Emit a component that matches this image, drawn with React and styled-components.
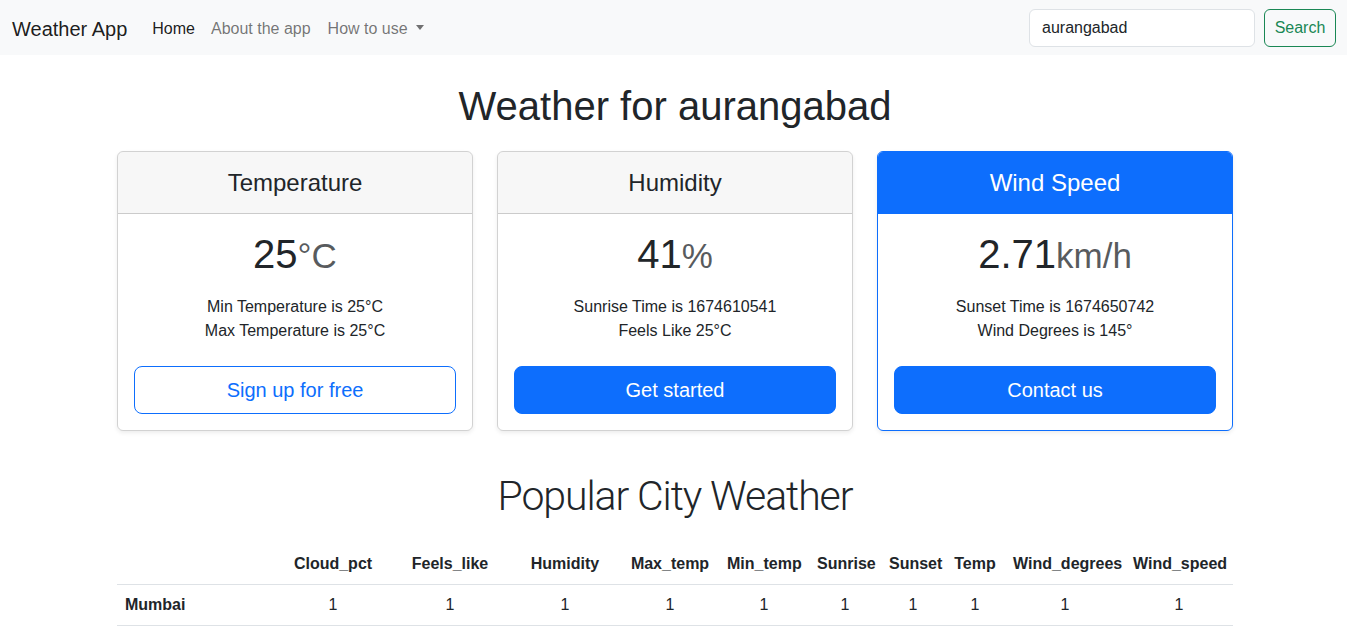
import React from 'react'
import styled, { createGlobalStyle } from 'styled-components'

const GlobalStyle = createGlobalStyle`
  *, *::before, *::after { box-sizing: border-box; }
  body {
    margin: 0;
    font-family: 'Liberation Sans', Arial, sans-serif;
    font-size: 16px;
    line-height: 1.5;
    color: #212529;
    background: #fff;
  }
`

const Navbar = styled.nav`
  display: flex;
  align-items: center;
  justify-content: space-between;
  height: 55px;
  padding: 0 11px 0 12px;
  background: #f8f9fa;
`

const Left = styled.div`
  display: flex;
  align-items: center;
  padding-top: 2px;
`

const Brand = styled.a`
  font-size: 20px;
  line-height: 30px;
  color: rgba(0, 0, 0, 0.9);
  margin-right: 17px;
  text-decoration: none;
`

const NavLink = styled.a`
  padding: 8px;
  margin-right: ${(p) => (p.wide ? '1px' : '0')};
  color: ${(p) => (p.active ? 'rgba(0,0,0,0.9)' : 'rgba(0,0,0,0.55)')};
  text-decoration: none;
  display: flex;
  align-items: center;
`

const Caret = styled.span`
  display: inline-block;
  margin-left: 8px;
  margin-top: -2px;
  border-top: 5px solid;
  border-left: 4.5px solid transparent;
  border-right: 4.5px solid transparent;
`

const SearchForm = styled.form`
  display: flex;
  align-items: center;
  gap: 9px;
`

const Input = styled.input`
  width: 226px;
  height: 38px;
  padding: 6px 12px;
  font: inherit;
  color: #212529;
  border: 1px solid #dee2e6;
  border-radius: 6px;
  background: #fff;
  outline: none;
`

const SearchButton = styled.button`
  width: 72px;
  height: 38px;
  padding: 0;
  font: inherit;
  color: #198754;
  background: transparent;
  border: 1px solid #198754;
  border-radius: 6px;
`

const Container = styled.main`
  width: 1119px;
  margin: 0 auto;
  padding-left: 3px;
`

const Header = styled.div`
  text-align: center;
  padding: 27px 0 21px;
`

const Title = styled.h1`
  margin: 0;
  font-size: 40px;
  line-height: 48px;
  font-weight: 400;
`

const Cards = styled.div`
  display: grid;
  grid-template-columns: repeat(3, 1fr);
  gap: 24px;
  text-align: center;
`

const Card = styled.div`
  border: 1px solid ${(p) => (p.primary ? '#0d6efd' : 'rgba(0,0,0,0.175)')};
  border-radius: 6px;
  box-shadow: 0 2px 4px rgba(0, 0, 0, 0.075);
  overflow: hidden;
`

const CardHeader = styled.div`
  padding: 16px;
  background: ${(p) => (p.primary ? '#0d6efd' : 'rgba(0,0,0,0.03)')};
  color: ${(p) => (p.primary ? '#fff' : '#212529')};
  border-bottom: 1px solid ${(p) => (p.primary ? '#0d6efd' : 'rgba(0,0,0,0.175)')};
  font-size: 24px;
  line-height: 29px;
`

const CardBody = styled.div`
  padding: 16px;
`

const Value = styled.div`
  font-size: 40px;
  line-height: 48px;
  margin-bottom: 15px;
`

const Unit = styled.small`
  font-size: 0.875em;
  font-weight: 300;
  color: rgba(33, 37, 41, 0.75);
`

const List = styled.ul`
  list-style: none;
  margin: 0 0 23px;
  padding: 0;
`

const Button = styled.button`
  width: 100%;
  height: 48px;
  font-family: inherit;
  font-size: 20px;
  border-radius: 8px;
  border: 1px solid #0d6efd;
  background: ${(p) => (p.outline ? 'transparent' : '#0d6efd')};
  color: ${(p) => (p.outline ? '#0d6efd' : '#fff')};
`

const SubTitle = styled.h2`
  margin: 37px 0 19px;
  text-align: center;
  font-family: Roboto, 'Liberation Sans', sans-serif;
  font-size: 41px;
  line-height: 57px;
  font-weight: 300;
  letter-spacing: -1.1px;
`

const Table = styled.table`
  width: 100%;
  table-layout: fixed;
  border-collapse: collapse;
  text-align: center;
`

const Col = styled.col`
  width: ${(p) => p.w}px;
`

const Th = styled.th`
  padding: 8px;
  font-weight: 700;
  line-height: 24px;
  white-space: nowrap;
  border-bottom: 1px solid #dee2e6;
  text-align: ${(p) => (p.left ? 'left' : 'center')};
`

const Td = styled.td`
  padding: 8px;
  line-height: 24px;
  border-bottom: 1px solid #dee2e6;
`

const cards = [
  {
    title: 'Temperature',
    value: '25',
    unit: '°C',
    lines: ['Min Temperature is 25°C', 'Max Temperature is 25°C'],
    button: 'Sign up for free',
    outline: true,
  },
  {
    title: 'Humidity',
    value: '41',
    unit: '%',
    lines: ['Sunrise Time is 1674610541', 'Feels Like 25°C'],
    button: 'Get started',
  },
  {
    title: 'Wind Speed',
    value: '2.71',
    unit: 'km/h',
    lines: ['Sunset Time is 1674650742', 'Wind Degrees is 145°'],
    button: 'Contact us',
    primary: true,
  },
]

const columns = [
  ['Cloud_pct', 116],
  ['Feels_like', 118],
  ['Humidity', 112],
  ['Max_temp', 98],
  ['Min_temp', 90],
  ['Sunrise', 72],
  ['Sunset', 64],
  ['Temp', 60],
  ['Wind_degrees', 120],
  ['Wind_speed', 108],
]

export default function App() {
  return (
    <>
      <GlobalStyle />
      <Navbar>
        <Left>
          <Brand href="#">Weather App</Brand>
          <NavLink href="#" active>
            Home
          </NavLink>
          <NavLink href="#" wide>
            About the app
          </NavLink>
          <NavLink href="#">
            How to use
            <Caret />
          </NavLink>
        </Left>
        <SearchForm onSubmit={(e) => e.preventDefault()}>
          <Input defaultValue="aurangabad" />
          <SearchButton>Search</SearchButton>
        </SearchForm>
      </Navbar>

      <Container>
        <Header>
          <Title>Weather for aurangabad</Title>
        </Header>

        <Cards>
          {cards.map((c) => (
            <Card key={c.title} primary={c.primary}>
              <CardHeader primary={c.primary}>{c.title}</CardHeader>
              <CardBody>
                <Value>
                  {c.value}
                  <Unit>{c.unit}</Unit>
                </Value>
                <List>
                  {c.lines.map((l) => (
                    <li key={l}>{l}</li>
                  ))}
                </List>
                <Button outline={c.outline}>{c.button}</Button>
              </CardBody>
            </Card>
          ))}
        </Cards>

        <SubTitle>Popular City Weather</SubTitle>

        <Table>
          <colgroup>
            <Col w={158} />
            {columns.map(([c, w]) => (
              <Col key={c} w={w} />
            ))}
          </colgroup>
          <thead>
            <tr>
              <Th left />
              {columns.map(([c]) => (
                <Th key={c}>{c}</Th>
              ))}
            </tr>
          </thead>
          <tbody>
            <tr>
              <Th left>Mumbai</Th>
              {columns.map(([c]) => (
                <Td key={c}>1</Td>
              ))}
            </tr>
          </tbody>
        </Table>
      </Container>
    </>
  )
}
